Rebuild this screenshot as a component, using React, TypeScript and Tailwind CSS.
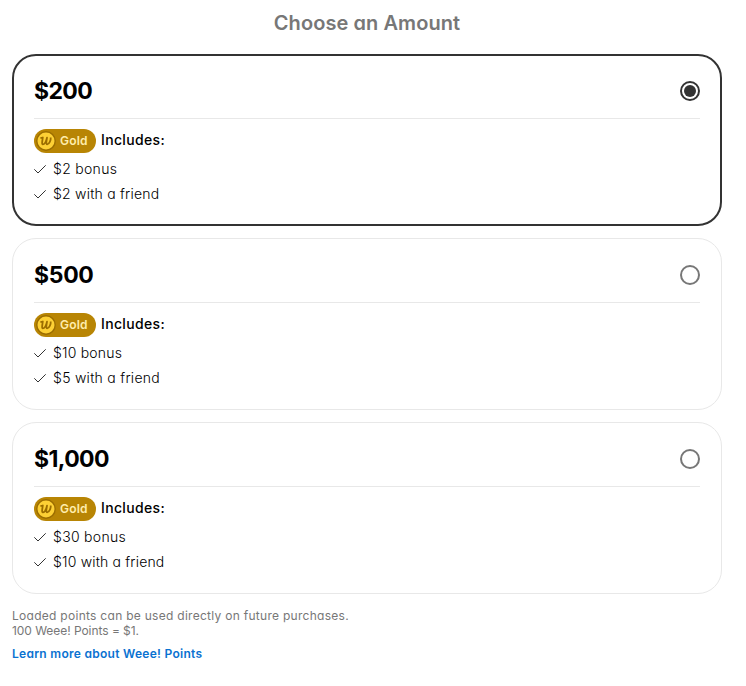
import { useState } from "react";

type Perk = { label: string; className: string };

type Plan = {
  amount: string;
  amountClass: string;
  perks: Perk[];
};

const plans: Plan[] = [
  {
    amount: "$200",
    amountClass: "tracking-[-0.6px]",
    perks: [
      { label: "$2 bonus", className: "tracking-[0.3px]" },
      { label: "$2 with a friend", className: "tracking-[0.22px]" },
    ],
  },
  {
    amount: "$500",
    amountClass: "tracking-[-0.3px]",
    perks: [
      { label: "$10 bonus", className: "tracking-[0.2px]" },
      { label: "$5 with a friend", className: "tracking-[0.28px]" },
    ],
  },
  {
    amount: "$1,000",
    amountClass: "tracking-[-0.6px]",
    perks: [
      { label: "$30 bonus", className: "tracking-[0.3px]" },
      { label: "$10 with a friend", className: "tracking-[0.18px]" },
    ],
  },
];

function CoinIcon() {
  return (
    <svg width="20" height="20" viewBox="0 0 20 20" fill="none" className="shrink-0">
      <circle cx="10" cy="10" r="9.9" fill="#9b6d00" />
      <circle cx="10" cy="10" r="8.5" fill="#fdd035" />
      <path
        d="M4.4 7.1L6.8 6.5C6.5 8.8 5.4 13.4 6.9 13.4C8.6 13.4 10.3 9.6 11 6.6C10.5 9.4 9.7 13.4 11.2 13.4C13.2 13.4 15 9.2 14.7 6.5"
        stroke="#9b6d00"
        strokeWidth="1.8"
        strokeLinejoin="round"
      />
    </svg>
  );
}

function GoldBadge() {
  return (
    <span className="flex h-6 w-[62px] items-center gap-1 rounded-full bg-[#b88504] pl-0.5">
      <CoinIcon />
      <span className="text-xs font-semibold tracking-[0.2px] text-[#ffedad]">Gold</span>
    </span>
  );
}

function CheckIcon() {
  return (
    <svg width="12" height="12" viewBox="0 0 12 12" fill="none" className="shrink-0">
      <path d="M0.3 6.3L4 10L11.7 2.3" stroke="#333" strokeWidth="1" />
    </svg>
  );
}

function Radio({ checked }: { checked: boolean }) {
  return (
    <span
      className={`flex size-5 items-center justify-center rounded-full border-2 ${
        checked ? "border-[#333]" : "border-[#777]"
      }`}
    >
      {checked && <span className="size-3 rounded-full bg-[#333]" />}
    </span>
  );
}

function PlanCard({
  plan,
  selected,
  onSelect,
}: {
  plan: Plan;
  selected: boolean;
  onSelect: () => void;
}) {
  return (
    <button
      type="button"
      role="radio"
      aria-checked={selected}
      onClick={onSelect}
      className={`flex h-[172px] w-full flex-col rounded-3xl pb-3 text-left ${
        selected ? "border-2 border-[#333] px-5 pt-5" : "border border-[#e8e8e8] px-[21px] pt-[21px]"
      }`}
    >
      <div className="flex h-[43px] w-full shrink-0 items-start justify-between border-b border-[#e8e8e8]">
        <span className={`text-[23px] leading-[31px] font-bold text-black ${plan.amountClass}`}>
          {plan.amount}
        </span>
        <span className="pt-[5px]">
          <Radio checked={selected} />
        </span>
      </div>
      <div className="mt-2.5 flex items-center gap-[5px]">
        <GoldBadge />
        <span className="pb-0.5 text-sm font-medium tracking-[0.35px] text-black">Includes:</span>
      </div>
      <ul className="mt-[3px]">
        {plan.perks.map((perk) => (
          <li key={perk.label} className="flex h-[25px] items-center gap-[7px]">
            <CheckIcon />
            <span className={`text-sm font-light text-black ${perk.className}`}>{perk.label}</span>
          </li>
        ))}
      </ul>
    </button>
  );
}

export default function App() {
  const [selected, setSelected] = useState(0);

  return (
    <main className="flex h-[686px] w-[746px] flex-col bg-white pl-3 font-['Inter','Open_Sans',sans-serif] whitespace-nowrap [font-feature-settings:'cv11']">
      <div className="flex w-[710px] flex-col">
        <h1 className="flex h-[54px] justify-center pt-2 text-xl leading-[30px] font-semibold tracking-[0.07px] text-[#777]">
          Choose an Amount
        </h1>
        <div role="radiogroup" className="flex flex-col gap-3">
          {plans.map((plan, i) => (
            <PlanCard
              key={plan.amount}
              plan={plan}
              selected={selected === i}
              onSelect={() => setSelected(i)}
            />
          ))}
        </div>
        <p className="mt-3.5 text-xs leading-[15px] text-[#777]">
          <span className="tracking-[0.28px]">Loaded points can be used directly on future purchases.</span>
          <br />
          <span className="tracking-[-0.05px]">100 Weee! Points = $1.</span>
        </p>
        <a href="#" className="mt-2 self-start text-xs leading-[15px] font-semibold tracking-[0.28px] text-[#0a72d1]">
          Learn more about Weee! Points
        </a>
      </div>
    </main>
  );
}
